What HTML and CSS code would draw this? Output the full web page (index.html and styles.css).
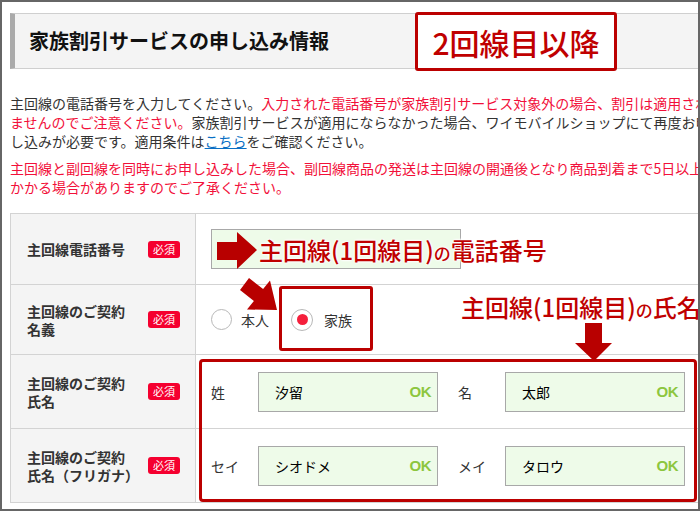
FILE: index.html
```html
<!DOCTYPE html>
<html lang="ja">
<head>
<meta charset="utf-8">
<title>家族割引サービスの申し込み情報</title>
<link rel="stylesheet" href="styles.css">
</head>
<body>
<div class="frame">
  <div class="page">
    <h2 class="heading">家族割引サービスの申し込み情報</h2>
    <p class="lead">主回線の電話番号を入力してください。<span class="red">入力された電話番号が家族割引サービス対象外の場合、割引は適用されませんのでご注意ください。</span>家族割引サービスが適用にならなかった場合、ワイモバイルショップにて再度お申し込みが必要です。適用条件は<a href="#">こちら</a>をご確認ください。</p>
    <p class="lead red">主回線と副回線を同時にお申し込みした場合、副回線商品の発送は主回線の開通後となり商品到着まで5日以上かかる場合がありますのでご了承ください。</p>
    <div class="form">
      <div class="th"><span class="lt">主回線電話番号</span><span class="req">必須</span></div>
      <div class="td"><div class="tel"></div></div>

      <div class="th"><span class="lt">主回線のご契約<br>名義</span><span class="req">必須</span></div>
      <div class="td">
        <span class="radio"></span><span class="rl">本人</span>
        <span class="radio checked"></span><span class="rl">家族</span>
      </div>

      <div class="th"><span class="lt">主回線のご契約<br>氏名</span><span class="req">必須</span></div>
      <div class="td">
        <span class="nl">姓</span><div class="inp"><span class="val">汐留</span><span class="ok">OK</span></div>
        <span class="nl">名</span><div class="inp"><span class="val">太郎</span><span class="ok">OK</span></div>
      </div>

      <div class="th"><span class="lt">主回線のご契約<br>氏名（フリガナ）</span><span class="req">必須</span></div>
      <div class="td">
        <span class="nl">セイ</span><div class="inp"><span class="val">シオドメ</span><span class="ok">OK</span></div>
        <span class="nl">メイ</span><div class="inp"><span class="val">タロウ</span><span class="ok">OK</span></div>
      </div>
    </div>
  </div>

  <div class="note-title">2回線目以降</div>
  <div class="box-family"></div>
  <div class="box-names"></div>
  <svg class="arrows" width="700" height="511" viewBox="0 0 700 511">
    <polygon points="217,242 237,242 237,232 257,250 237,269 237,260 217,260"/>
    <polygon points="240,290 253.9,300.9 247,309.5 277,310 270,280.5 263.1,289.1 249,278"/>
    <polygon points="585,323 602,323 602,343 612,343 594,361 575,343 585,343"/>
  </svg>
  <div class="note note-tel">主回線(1回線目)<span class="no">の</span>電話番号</div>
  <div class="note note-name">主回線(1回線目)<span class="no">の</span>氏名</div>
</div>
</body>
</html>
```

FILE: styles.css
```css
* { box-sizing: border-box; }
html, body { margin: 0; padding: 0; }
body {
  width: 700px;
  height: 511px;
  overflow: hidden;
  background: #fff;
  color: #333;
  font-family: "Noto Sans CJK JP", "Noto Sans", sans-serif;
}
.frame {
  position: relative;
  width: 700px;
  height: 511px;
  border: 2px solid #666;
  overflow: hidden;
}
.page {
  width: 740px;
  padding: 11px 0 0 8px;
}
.heading {
  margin: 0;
  width: 720px;
  height: 56px;
  display: flex;
  align-items: center;
  padding-left: 14px;
  background: #f4f4f4;
  border-top: 1px solid #cfcfcf;
  border-bottom: 1px solid #cfcfcf;
  border-left: 5px solid #aaa;
  font-size: 20px;
  font-weight: bold;
  line-height: 1;
  color: #111;
}
.lead {
  margin: 25px 0 0;
  width: 702px;
  font-size: 14px;
  line-height: 19px;
  color: #333;
}
.lead + .lead { margin-top: 8px; }
.red { color: #f2103a; }
.lead a { color: #0a6fc4; text-decoration: underline; }

.form {
  margin-top: 16px;
  width: 721px;
  display: grid;
  grid-template-columns: 185px 535px;
  grid-template-rows: 71px 70px 74px 74px;
  border-top: 1px solid #d3d3d3;
  border-left: 1px solid #d3d3d3;
}
.th {
  display: flex;
  align-items: center;
  padding-left: 16px;
  background: #f4f4f4;
  border-right: 1px solid #d3d3d3;
  border-bottom: 1px solid #d3d3d3;
}
.td {
  display: flex;
  align-items: center;
  padding-left: 15px;
  border-bottom: 1px solid #d3d3d3;
}
.lt {
  width: 121px;
  font-size: 14px;
  font-weight: bold;
  line-height: 18px;
  color: #333;
}
.req {
  width: 32px;
  height: 17px;
  border-radius: 3px;
  background: #f5002f;
  color: #fff;
  font-size: 11px;
  line-height: 17px;
  text-align: center;
}
.tel {
  width: 250px;
  height: 40px;
  border: 1px solid #a8a8a8;
  background: #eefbe9;
}
.radio {
  width: 21px;
  height: 21px;
  border: 1px solid #b8b8b8;
  border-radius: 50%;
  background: #fff;
  display: flex;
  align-items: center;
  justify-content: center;
}
.radio.checked { width: 22px; height: 22px; margin-left: 22px; }
.radio.checked::after {
  content: "";
  width: 11px;
  height: 11px;
  border-radius: 50%;
  background: #f5203c;
}
.rl {
  margin-left: 9px;
  font-size: 14px;
  line-height: 1;
  color: #333;
}
.radio.checked + .rl { margin-left: 11px; }
.nl {
  width: 47px;
  font-size: 14px;
  color: #333;
}
.inp {
  width: 180px;
  height: 40px;
  margin-right: 20px;
  display: flex;
  align-items: center;
  justify-content: space-between;
  padding: 0 6px 0 16px;
  border: 1px solid #a8a8a8;
  background: #eefbe9;
}
.val { font-size: 14px; color: #000; }
.ok {
  font-family: "Liberation Sans", Arial, sans-serif;
  font-size: 15px;
  font-weight: bold;
  letter-spacing: -0.5px;
  color: #8cc63f;
}

.note-title {
  position: absolute;
  left: 413px;
  top: 10px;
  width: 202px;
  height: 59px;
  display: flex;
  align-items: center;
  justify-content: center;
  border: 3px solid #bb0000;
  border-radius: 3px;
  background: #fff;
  color: #c00000;
  font-size: 30px;
  font-weight: 500;
  line-height: 1;
}
.box-family {
  position: absolute;
  left: 277px;
  top: 284px;
  width: 94px;
  height: 65px;
  border: 3px solid #bb0000;
  border-radius: 3px;
}
.box-names {
  position: absolute;
  left: 197px;
  top: 357px;
  width: 498px;
  height: 143px;
  border: 3px solid #bb0000;
  border-radius: 4px;
}
.arrows {
  position: absolute;
  left: -2px;
  top: -2px;
  fill: #b80000;
}
.note {
  position: absolute;
  font-size: 24px;
  font-weight: 500;
  line-height: 24px;
  color: #c00000;
  white-space: nowrap;
  text-shadow: 0 0 2px #fff, 0 0 2px #fff, 0 0 3px #fff, 0 0 3px #fff;
}
.note .no { font-size: 17px; }
.note-tel { left: 257px; top: 236px; }
.note-name { left: 459px; top: 293px; }
```
